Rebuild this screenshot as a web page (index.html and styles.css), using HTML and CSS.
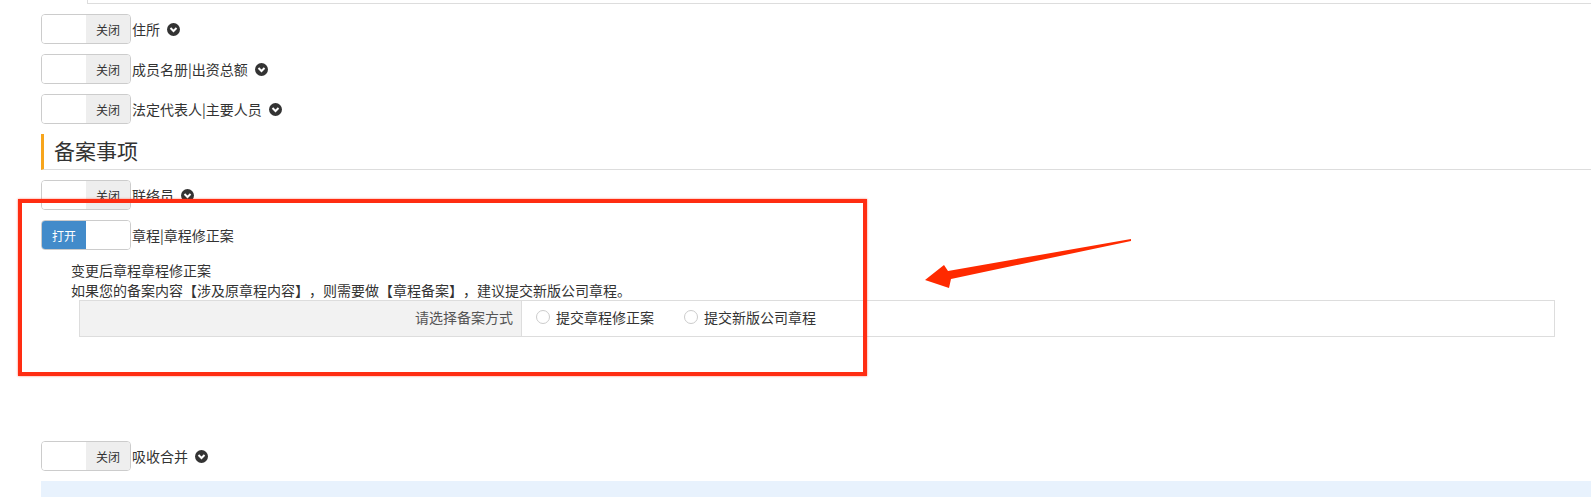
FILE: index.html
```html
<!DOCTYPE html>
<html lang="zh-CN">
<head>
    <meta charset="UTF-8">
    <meta name="viewport" content="width=device-width, initial-scale=1.0">
    <title>备案事项</title>
    <link rel="stylesheet" href="styles.css">
</head>
<body>
    <div class="page">
        <div class="top-box"></div>

        <div class="form">
            <div class="switch-row">
                <span class="switch"><span class="sw-blank"></span><span class="sw-off">关闭</span></span>
                <span class="row-label">住所</span>
                <svg class="chev" viewBox="0 0 16 16"><circle cx="8" cy="8" r="8" fill="#333"/><path d="M4.3 6.2 L8 9.9 L11.7 6.2" stroke="#fff" stroke-width="2.4" fill="none"/></svg>
            </div>
            <div class="switch-row">
                <span class="switch"><span class="sw-blank"></span><span class="sw-off">关闭</span></span>
                <span class="row-label">成员名册|出资总额</span>
                <svg class="chev" viewBox="0 0 16 16"><circle cx="8" cy="8" r="8" fill="#333"/><path d="M4.3 6.2 L8 9.9 L11.7 6.2" stroke="#fff" stroke-width="2.4" fill="none"/></svg>
            </div>
            <div class="switch-row">
                <span class="switch"><span class="sw-blank"></span><span class="sw-off">关闭</span></span>
                <span class="row-label">法定代表人|主要人员</span>
                <svg class="chev" viewBox="0 0 16 16"><circle cx="8" cy="8" r="8" fill="#333"/><path d="M4.3 6.2 L8 9.9 L11.7 6.2" stroke="#fff" stroke-width="2.4" fill="none"/></svg>
            </div>

            <div class="section-title">备案事项</div>

            <div class="switch-row">
                <span class="switch"><span class="sw-blank"></span><span class="sw-off">关闭</span></span>
                <span class="row-label">联络员</span>
                <svg class="chev" viewBox="0 0 16 16"><circle cx="8" cy="8" r="8" fill="#333"/><path d="M4.3 6.2 L8 9.9 L11.7 6.2" stroke="#fff" stroke-width="2.4" fill="none"/></svg>
            </div>
            <div class="switch-row">
                <span class="switch"><span class="sw-on">打开</span><span class="sw-blank"></span></span>
                <span class="row-label">章程|章程修正案</span>
            </div>

            <div class="detail">
                <p>变更后章程章程修正案</p>
                <p>如果您的备案内容【涉及原章程内容】，则需要做【章程备案】，建议提交新版公司章程。</p>
                <div class="choose">
                    <div class="choose-label">请选择备案方式</div>
                    <div class="choose-opts">
                        <label class="radio"><span class="dot"></span>提交章程修正案</label>
                        <label class="radio"><span class="dot"></span>提交新版公司章程</label>
                    </div>
                </div>
            </div>

            <div class="switch-row">
                <span class="switch"><span class="sw-blank"></span><span class="sw-off">关闭</span></span>
                <span class="row-label">吸收合并</span>
                <svg class="chev" viewBox="0 0 16 16"><circle cx="8" cy="8" r="8" fill="#333"/><path d="M4.3 6.2 L8 9.9 L11.7 6.2" stroke="#fff" stroke-width="2.4" fill="none"/></svg>
            </div>

            <div class="info-bar"></div>
        </div>

        <!-- annotation -->
        <div class="mark-box"></div>
        <svg class="mark-arrow" viewBox="0 0 215 60">
            <polygon points="5,46 24,31 28,37 211,5 211,7 31,45 29,54" fill="#ff2a00"/>
        </svg>
    </div>
</body>
</html>
```

FILE: styles.css
```css
body {
    margin: 0;
    padding: 0;
    font-family: "Noto Sans CJK SC", "Liberation Sans", sans-serif;
    font-size: 14px;
    color: #333;
    background-color: #fff;
    text-spacing-trim: space-all;
}

.page {
    position: relative;
    height: 497px;
    overflow: hidden;
}

.top-box {
    margin-left: 87px;
    height: 3px;
    border-left: 1px solid #ddd;
    border-bottom: 1px solid #ddd;
}

.form {
    padding-left: 41px;
    padding-top: 10px;
}

.switch-row {
    display: flex;
    align-items: center;
    height: 30px;
    margin-bottom: 10px;
}

.switch {
    display: flex;
    width: 90px;
    height: 30px;
    box-sizing: border-box;
    border: 1px solid #ccc;
    border-radius: 4px;
    overflow: hidden;
    font-size: 12px;
}

.switch span {
    flex: 1;
    display: flex;
    align-items: center;
    justify-content: center;
}

.sw-blank {
    background-color: #fff;
}

.sw-off {
    background-color: #eee;
    color: #333;
}

.sw-on {
    background-color: #428bca;
    color: #fff;
}

.row-label {
    margin-left: 1px;
    line-height: 20px;
}

.chev {
    width: 13px;
    height: 13px;
    margin-left: 7px;
}

.section-title {
    height: 35px;
    line-height: 33px;
    border-left: 3px solid #f7a51c;
    border-bottom: 1px solid #ddd;
    padding-left: 10px;
    font-size: 21px;
    margin-bottom: 10px;
}

.detail {
    padding-left: 30px;
    padding-bottom: 104px;
}

.detail p {
    margin: 0;
    line-height: 20px;
}

.choose {
    display: flex;
    margin-left: 8px;
    margin-right: 36px;
    height: 37px;
    box-sizing: border-box;
    border: 1px solid #ddd;
}

.choose-label {
    width: 442px;
    background-color: #f2f2f2;
    border-right: 1px solid #ddd;
    text-align: right;
    padding-right: 8px;
    box-sizing: border-box;
    line-height: 33px;
    color: #555;
}

.choose-opts {
    display: flex;
    align-items: center;
    padding-left: 14px;
    gap: 30px;
    padding-bottom: 4px;
}

.radio {
    display: flex;
    align-items: center;
}

.radio .dot {
    width: 14px;
    height: 14px;
    box-sizing: border-box;
    border: 1px solid #ccc;
    border-radius: 50%;
    margin-right: 6px;
    background-color: #fff;
}

.info-bar {
    height: 20px;
    background-color: #e8f2fd;
}

.mark-box {
    position: absolute;
    left: 18px;
    top: 199px;
    width: 849px;
    height: 177px;
    box-sizing: border-box;
    border: 4px solid #ff2d12;
    box-shadow: 0 0 2px rgba(255, 45, 18, 0.6);
}

.mark-arrow {
    position: absolute;
    left: 920px;
    top: 234px;
    width: 215px;
    height: 60px;
}
```
